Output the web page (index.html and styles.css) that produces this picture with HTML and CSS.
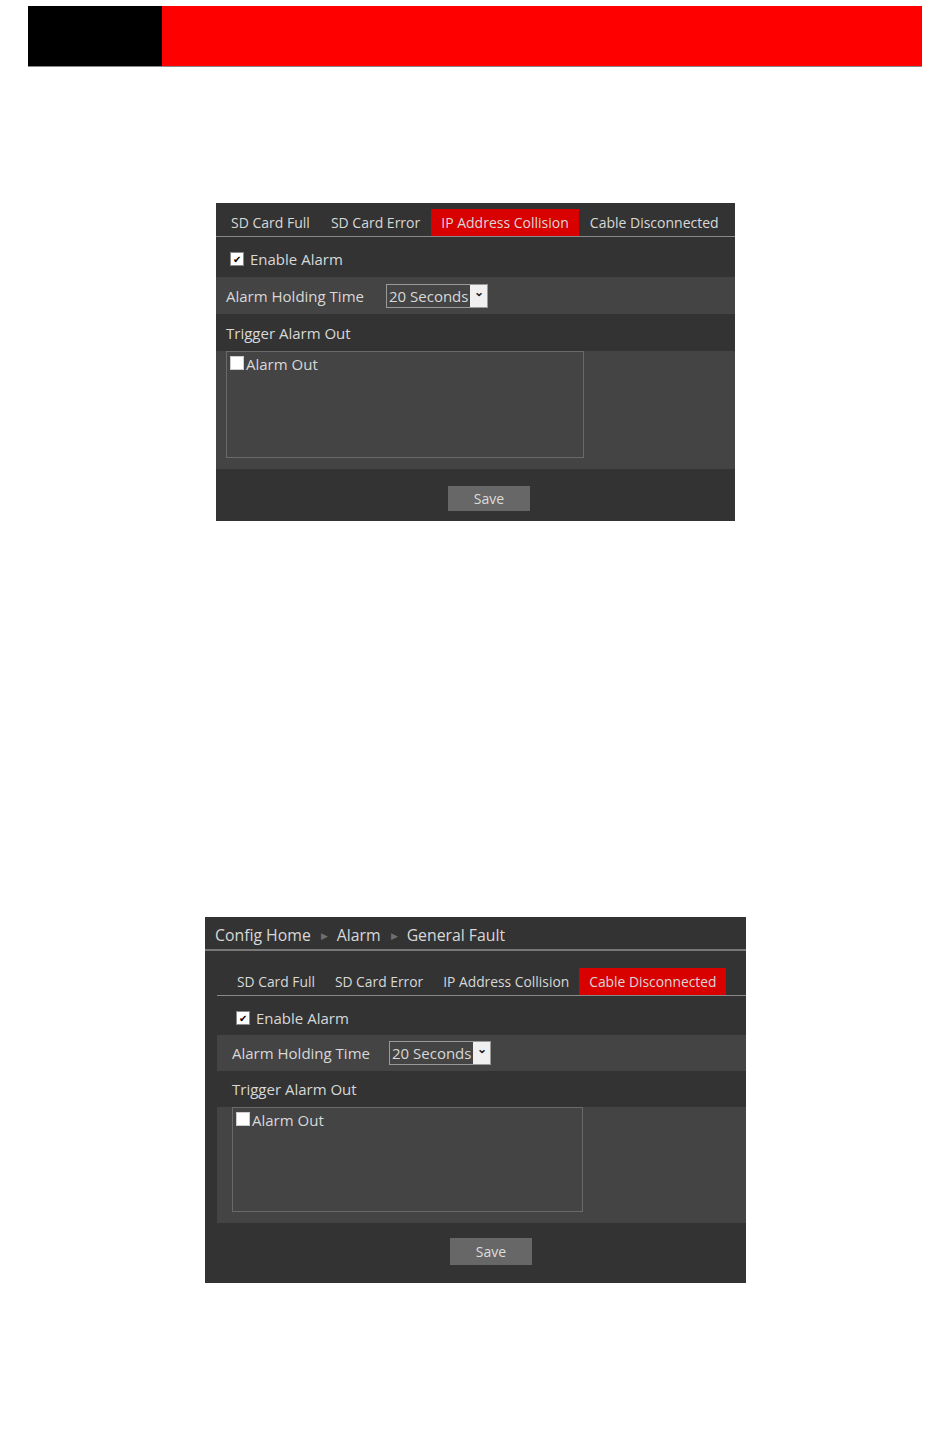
FILE: index.html
```html
<!DOCTYPE html>
<html lang="en">
<head>
    <meta charset="UTF-8">
    <title>General Fault</title>
    <link rel="stylesheet" href="styles.css">
</head>
<body>

<header class="topbar">
    <div class="topbar-black"></div>
    <div class="topbar-red"></div>
</header>

<div class="panel panel-one">
    <div class="tabs">
        <span class="tab">SD Card Full</span>
        <span class="tab">SD Card Error</span>
        <span class="tab active">IP Address Collision</span>
        <span class="tab">Cable Disconnected</span>
    </div>
    <div class="row row-enable">
        <span class="check checked">&#10004;</span>
        <span>Enable Alarm</span>
    </div>
    <div class="row row-light">
        <span class="label">Alarm Holding Time</span>
        <div class="select">
            <span class="select-value">20 Seconds</span>
            <span class="select-arrow">&#8964;</span>
        </div>
    </div>
    <div class="row row-trigger">
        <span class="label">Trigger Alarm Out</span>
    </div>
    <div class="out-area">
        <div class="out-box">
            <span class="check"></span>
            <span>Alarm Out</span>
        </div>
    </div>
    <div class="save-row">
        <button class="save">Save</button>
    </div>
</div>

<div class="panel panel-two">
    <div class="crumbs">
        <span>Config Home</span>
        <span class="crumb-arrow">&#9654;</span>
        <span>Alarm</span>
        <span class="crumb-arrow">&#9654;</span>
        <span>General Fault</span>
    </div>
    <div class="content">
        <div class="tabs">
            <span class="tab">SD Card Full</span>
            <span class="tab">SD Card Error</span>
            <span class="tab">IP Address Collision</span>
            <span class="tab active">Cable Disconnected</span>
        </div>
        <div class="row row-enable">
            <span class="check checked">&#10004;</span>
            <span>Enable Alarm</span>
        </div>
        <div class="row row-light">
            <span class="label">Alarm Holding Time</span>
            <div class="select">
                <span class="select-value">20 Seconds</span>
                <span class="select-arrow">&#8964;</span>
            </div>
        </div>
        <div class="row row-trigger">
            <span class="label">Trigger Alarm Out</span>
        </div>
        <div class="out-area">
            <div class="out-box">
                <span class="check"></span>
                <span>Alarm Out</span>
            </div>
        </div>
        <div class="save-row">
            <button class="save">Save</button>
        </div>
    </div>
</div>

</body>
</html>
```

FILE: styles.css
```css
body {
    margin: 0;
    padding: 0;
    background-color: white;
    font-family: "Open Sans", "Noto Sans", sans-serif;
    color: #d8d8d8;
}

.topbar {
    display: flex;
    margin: 6px 28px 0 28px;
    height: 60px;
    border-bottom: 1px solid #888;
}

.topbar-black {
    width: 134px;
    background-color: #000;
}

.topbar-red {
    flex: 1;
    background-color: #ff0000;
}

.panel {
    background-color: #333;
}

.panel-one {
    width: 519px;
    margin-left: 216px;
    margin-top: 136px;
    padding-top: 6px;
}

.panel-two {
    width: 541px;
    margin-left: 205px;
    margin-top: 396px;
}

.content {
    margin-left: 12px;
}

.crumbs {
    display: flex;
    align-items: center;
    height: 34px;
    padding-left: 10px;
    padding-top: 4px;
    box-sizing: border-box;
    font-size: 15.8px;
    border-bottom: 2px solid #777;
}

.crumb-arrow {
    color: #6f6f6f;
    font-size: 9px;
    margin: 0 9px 0 10px;
}

.tabs {
    display: flex;
    height: 27px;
    padding-left: 5px;
    border-bottom: 1px solid #888;
    font-size: 14px;
}

.panel-two .tabs {
    margin-top: 17px;
    padding-left: 10px;
    font-size: 13.83px;
}

.tab {
    display: flex;
    align-items: center;
    padding: 0 10px;
    margin-right: 1px;
}

.panel-two .tab {
    margin-right: 0;
}

.tab.active {
    background-color: #d90000;
}

.row {
    display: flex;
    align-items: center;
    height: 37px;
    padding-left: 10px;
    font-size: 15px;
}

.panel-two .row {
    padding-left: 15px;
}

.row-enable {
    height: 40px;
    padding-left: 14px;
    padding-top: 4px;
    box-sizing: border-box;
}

.panel-two .row-enable {
    height: 39px;
    padding-left: 19px;
    padding-top: 4px;
}

.row-light {
    background-color: #444;
}

.panel-two .row-light {
    height: 36px;
}

.panel-two .row-trigger {
    height: 36px;
}

.label {
    width: 160px;
}

.panel-two .label {
    width: 157px;
}

.check {
    display: inline-flex;
    align-items: center;
    justify-content: center;
    width: 12px;
    height: 12px;
    background-color: white;
    border: 1px solid #888;
    color: #000;
    font-size: 10px;
    line-height: 1;
    margin-right: 6px;
}

.out-box .check {
    margin-right: 2px;
    border-color: #ccc;
}

.select {
    display: flex;
    height: 22px;
    border: 1px solid #999;
    font-size: 15px;
}

.select-value {
    display: flex;
    align-items: center;
    padding: 0 2px;
}

.select-arrow {
    display: flex;
    justify-content: center;
    width: 17px;
    background-color: #f0f0f0;
    color: #222;
    font-size: 12px;
    line-height: 14px;
    font-weight: bold;
}

.out-area {
    background-color: #444;
    height: 118px;
    padding-left: 10px;
}

.panel-two .out-area {
    height: 116px;
    padding-left: 15px;
}

.out-box {
    display: flex;
    align-items: flex-start;
    box-sizing: border-box;
    width: 358px;
    height: 107px;
    border: 1px solid #6a6a6a;
    padding: 3px 0 0 3px;
    font-size: 15px;
    line-height: 18px;
}

.out-box .check {
    margin-top: 1px;
}

.panel-two .out-box {
    width: 351px;
    height: 105px;
}

.save-row {
    height: 52px;
    padding-left: 232px;
    padding-top: 17px;
    box-sizing: border-box;
}

.panel-two .save-row {
    height: 60px;
    padding-left: 233px;
    padding-top: 15px;
}

.save {
    width: 82px;
    height: 25px;
    border: none;
    background-color: #676767;
    color: #ddd;
    font-family: "Open Sans", "Noto Sans", sans-serif;
    font-size: 14px;
    padding: 0;
}

.panel-two .save {
    height: 27px;
}
```
